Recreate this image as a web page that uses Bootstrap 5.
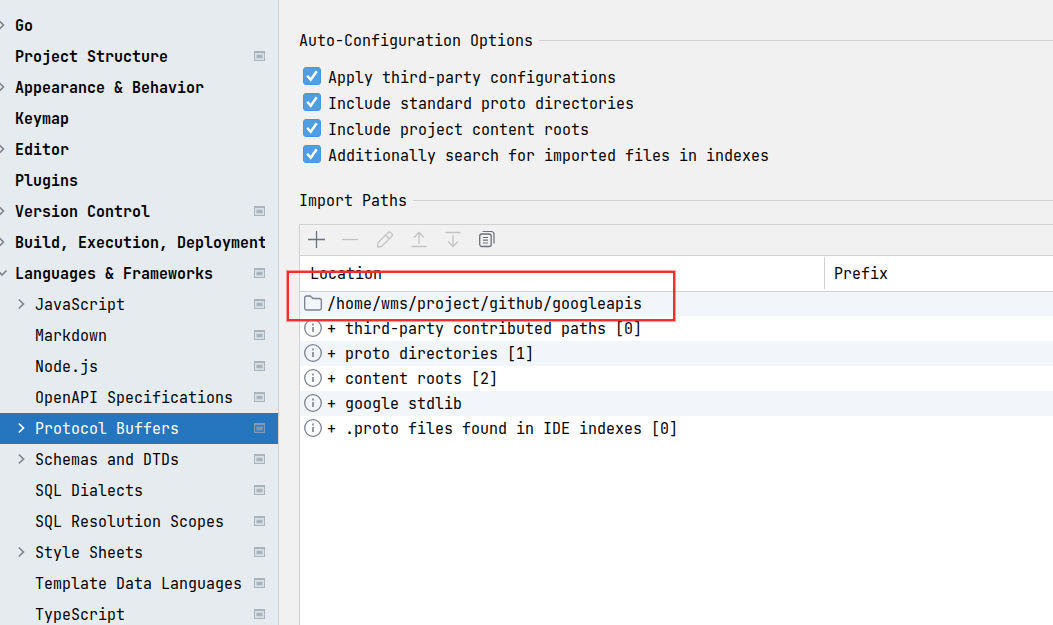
<!DOCTYPE html>
<html lang="en">
<head>
<meta charset="utf-8">
<meta name="viewport" content="width=device-width, initial-scale=1">
<title>Settings - Protocol Buffers</title>
<link href="https://cdn.jsdelivr.net/npm/bootstrap@5.3.0/dist/css/bootstrap.min.css" rel="stylesheet">
<style>
  body { font-family: "JetBrains Mono", "Liberation Mono", monospace; font-size: 15px; line-height: 20px; color: #000; background: #f1f1f1; }
  svg { display: block; flex: none; fill: none; }

  /* settings tree */
  .tree { width: 279px; padding-top: 10px; background: #e6ebef; border-right: 1px solid #d1d1d1; }
  .tree a { height: 31px; margin-left: -2px; padding-right: 13px; color: #000; font-weight: 700; white-space: nowrap; text-decoration: none; }
  .tree a.sub { margin-left: 0; padding-left: 18px; font-weight: 400; }
  .tree a.active { background: #2675bf; color: #fff; }
  .tree svg { margin-bottom: 1px; }
  .slot { width: 17px; flex: none; }
  .chev { stroke: #7f8389; stroke-width: 1.6; }
  .active .chev { stroke: #fff; }
  .scope { margin-left: auto; color: #a9b4bd; --inner: #d9e0e5; }
  .active .scope { color: #7d99b5; --inner: #3f7fbe; }

  /* settings page */
  .page { padding: 31px 0 0 20px; }
  .section-title { gap: 6px; font-size: 15px; line-height: 20px; font-weight: 400; margin: 0; }
  .section-title::after { content: ""; flex: 1; margin-bottom: 2px; border-top: 1px solid #d1d1d1; }
  .options { padding: 14px 0 22px 4px; }
  .options .form-check { height: 26px; min-height: 0; margin: 0; padding: 0; gap: 7px; }
  .options .form-check-input { float: none; width: 18px; height: 18px; margin: 0 0 4px; border-radius: 3px; flex: none; }
  .options .form-check-input:checked { border-color: #4a97dd; background-color: #4f9ee3;
    background-image: url("data:image/svg+xml,%3Csvg xmlns='http://www.w3.org/2000/svg' viewBox='0 0 18 18'%3E%3Cpath d='M4.2 8.800l3.500 4 6-8.600' fill='none' stroke='%23fff' stroke-width='2.5'/%3E%3C/svg%3E"); background-size: 18px 18px; }

  .paths { margin-top: 13px; border: 1px solid #d1d1d1; border-right: 0; border-bottom: 0; background: #fff; }
  .tools { height: 31px; background: #f1f1f1; border-bottom: 1px solid #d1d1d1; }
  .tools button { width: 34px; padding: 0 8px 2px; border: 0; background: none; stroke: #6c707e; }
  .tools button:disabled { stroke: #c3c3c3; }
  .paths table { table-layout: fixed; }
  .paths th { height: 35px; padding: 2px 9px 0; font-weight: 400; border-bottom: 1px solid #d1d1d1; }
  .paths th:first-child { width: 525px; padding-left: 10px; background: linear-gradient(#d1d1d1, #d1d1d1) right 1px / 1px 32px no-repeat; }
  .paths td { height: 25px; padding: 0 4px; white-space: nowrap; }
  .paths tbody tr:nth-child(odd) { background: #f2f5fa; }
  .entry { gap: 5px; }
  .entry svg { stroke: #7d818f; margin-bottom: 2px; }
  .callout { left: -13px; top: 46px; width: 388px; height: 50px; border: 2px solid #fb2c2c; outline: 1px solid #fb2c2c77; pointer-events: none; }
</style>
</head>
<body>
<svg width="0" height="0" class="position-absolute" aria-hidden="true">
  <symbol id="right" viewBox="0 0 8 12"><path d="M.8 1.500L5.500 6 .8 10.500"/></symbol>
  <symbol id="down" viewBox="0 0 12 12"><path d="M0 3.500L4 8 8.500 3.500"/></symbol>
  <symbol id="scope" viewBox="0 0 11 10"><path fill="currentColor" d="M0 0h11v10H0z"/><path style="fill: var(--inner)" d="M1 2h9v7H1z"/><path fill="currentColor" d="M2.500 3.800h6v3.400h-6z"/></symbol>
  <symbol id="info" viewBox="0 0 18 18"><circle cx="9" cy="9" r="8.300" stroke-width="1.3"/><path d="M9 8v5M9 4.500v2" stroke-width="1.6"/></symbol>
  <symbol id="folder" viewBox="0 0 18 18"><path d="M.7 4q0-2 2-2h3.500l2.800 2.500h6.300q2 0 2 2v7.500q0 2-2 2H2.700q-2 0-2-2z" stroke-width="1.300"/></symbol>
</svg>

<div class="d-flex vh-100 overflow-hidden">
  <nav class="tree flex-shrink-0 overflow-hidden" aria-label="Settings">
    <a href="#" class="d-flex align-items-center"><span class="slot"><svg class="chev" width="8" height="12"><use href="#right"/></svg></span>Go</a>
    <a href="#" class="d-flex align-items-center"><span class="slot"></span>Project Structure<svg class="scope" width="11" height="10"><use href="#scope"/></svg></a>
    <a href="#" class="d-flex align-items-center"><span class="slot"><svg class="chev" width="8" height="12"><use href="#right"/></svg></span>Appearance &amp; Behavior</a>
    <a href="#" class="d-flex align-items-center"><span class="slot"></span>Keymap</a>
    <a href="#" class="d-flex align-items-center"><span class="slot"><svg class="chev" width="8" height="12"><use href="#right"/></svg></span>Editor</a>
    <a href="#" class="d-flex align-items-center"><span class="slot"></span>Plugins</a>
    <a href="#" class="d-flex align-items-center"><span class="slot"><svg class="chev" width="8" height="12"><use href="#right"/></svg></span>Version Control<svg class="scope" width="11" height="10"><use href="#scope"/></svg></a>
    <a href="#" class="d-flex align-items-center"><span class="slot"><svg class="chev" width="8" height="12"><use href="#right"/></svg></span><span class="overflow-hidden">Build, Execution, Deployment</span></a>
    <a href="#" class="d-flex align-items-center"><span class="slot"><svg class="chev" width="12" height="12"><use href="#down"/></svg></span>Languages &amp; Frameworks<svg class="scope" width="11" height="10"><use href="#scope"/></svg></a>
    <a href="#" class="sub d-flex align-items-center"><span class="slot"><svg class="chev" width="8" height="12"><use href="#right"/></svg></span>JavaScript<svg class="scope" width="11" height="10"><use href="#scope"/></svg></a>
    <a href="#" class="sub d-flex align-items-center"><span class="slot"></span>Markdown<svg class="scope" width="11" height="10"><use href="#scope"/></svg></a>
    <a href="#" class="sub d-flex align-items-center"><span class="slot"></span>Node.js<svg class="scope" width="11" height="10"><use href="#scope"/></svg></a>
    <a href="#" class="sub d-flex align-items-center"><span class="slot"></span>OpenAPI Specifications<svg class="scope" width="11" height="10"><use href="#scope"/></svg></a>
    <a href="#" class="sub active d-flex align-items-center" aria-current="page"><span class="slot"><svg class="chev" width="8" height="12"><use href="#right"/></svg></span>Protocol Buffers<svg class="scope" width="11" height="10"><use href="#scope"/></svg></a>
    <a href="#" class="sub d-flex align-items-center"><span class="slot"><svg class="chev" width="8" height="12"><use href="#right"/></svg></span>Schemas and DTDs<svg class="scope" width="11" height="10"><use href="#scope"/></svg></a>
    <a href="#" class="sub d-flex align-items-center"><span class="slot"></span>SQL Dialects<svg class="scope" width="11" height="10"><use href="#scope"/></svg></a>
    <a href="#" class="sub d-flex align-items-center"><span class="slot"></span>SQL Resolution Scopes<svg class="scope" width="11" height="10"><use href="#scope"/></svg></a>
    <a href="#" class="sub d-flex align-items-center"><span class="slot"><svg class="chev" width="8" height="12"><use href="#right"/></svg></span>Style Sheets<svg class="scope" width="11" height="10"><use href="#scope"/></svg></a>
    <a href="#" class="sub d-flex align-items-center"><span class="slot"></span>Template Data Languages<svg class="scope" width="11" height="10"><use href="#scope"/></svg></a>
    <a href="#" class="sub d-flex align-items-center"><span class="slot"></span>TypeScript<svg class="scope" width="11" height="10"><use href="#scope"/></svg></a>
  </nav>

  <main class="page d-flex flex-column flex-grow-1">
    <h2 class="section-title d-flex align-items-center">Auto-Configuration Options</h2>
    <div class="options">
      <div class="form-check d-flex align-items-center"><input class="form-check-input" type="checkbox" id="third" checked><label for="third">Apply third-party configurations</label></div>
      <div class="form-check d-flex align-items-center"><input class="form-check-input" type="checkbox" id="standard" checked><label for="standard">Include standard proto directories</label></div>
      <div class="form-check d-flex align-items-center"><input class="form-check-input" type="checkbox" id="roots" checked><label for="roots">Include project content roots</label></div>
      <div class="form-check d-flex align-items-center"><input class="form-check-input" type="checkbox" id="indexes" checked><label for="indexes">Additionally search for imported files in indexes</label></div>
    </div>

    <h2 class="section-title d-flex align-items-center">Import Paths</h2>
    <div class="paths position-relative flex-grow-1">
      <div class="tools d-flex align-items-center" role="toolbar" aria-label="Import path actions">
        <button type="button" aria-label="Add"><svg width="18" height="18"><path d="M0 9.500h17M8.500 1v17" stroke-width="1.3"/></svg></button>
        <button type="button" aria-label="Remove" disabled><svg width="18" height="18"><path d="M0 9.500h16" stroke-width="1.300"/></svg></button>
        <button type="button" aria-label="Edit" disabled><svg width="18" height="18"><path d="M1.700 17v-4L12 2.600q1.400-1.200 2.800 0l1 1q1.300 1.400 0 2.800L5.500 16.500zM9.500 5l4 4" stroke-width="1.300" stroke-linejoin="round"/></svg></button>
        <button type="button" aria-label="Move up" disabled><svg width="18" height="18"><path d="M9 14V2.500M4 7.500l5-5 5 5M1.500 16.500h15" stroke-width="1.300"/></svg></button>
        <button type="button" aria-label="Move down" disabled><svg width="18" height="18"><path d="M9 5v11.500M4 11.500l5 5 5-5M1.500 2.500h15" stroke-width="1.300"/></svg></button>
        <button type="button" aria-label="Copy"><svg width="18" height="18"><rect x="1.700" y="4" width="11.500" height="12.500" rx="2.200" stroke-width="1.300"/><path d="M4.500 1.500h8.500q3 0 3 3v9M5 7.500h5M5 10.200h5M5 13h5" stroke-width="1.200"/></svg></button>
      </div>
      <table class="w-100">
        <thead><tr><th scope="col">Location</th><th scope="col">Prefix</th></tr></thead>
        <tbody>
          <tr><td><div class="entry d-flex align-items-center"><svg width="18" height="18"><use href="#folder"/></svg>/home/wms/project/github/googleapis</div></td><td></td></tr>
          <tr><td><div class="entry d-flex align-items-center"><svg width="18" height="18"><use href="#info"/></svg>+ third-party contributed paths [0]</div></td><td></td></tr>
          <tr><td><div class="entry d-flex align-items-center"><svg width="18" height="18"><use href="#info"/></svg>+ proto directories [1]</div></td><td></td></tr>
          <tr><td><div class="entry d-flex align-items-center"><svg width="18" height="18"><use href="#info"/></svg>+ content roots [2]</div></td><td></td></tr>
          <tr><td><div class="entry d-flex align-items-center"><svg width="18" height="18"><use href="#info"/></svg>+ google stdlib</div></td><td></td></tr>
          <tr><td><div class="entry d-flex align-items-center"><svg width="18" height="18"><use href="#info"/></svg>+ .proto files found in IDE indexes [0]</div></td><td></td></tr>
        </tbody>
      </table>
      <div class="callout position-absolute"></div>
    </div>
  </main>
</div>
<script src="https://cdn.jsdelivr.net/npm/bootstrap@5.3.0/dist/js/bootstrap.bundle.min.js"></script>
</body>
</html>
